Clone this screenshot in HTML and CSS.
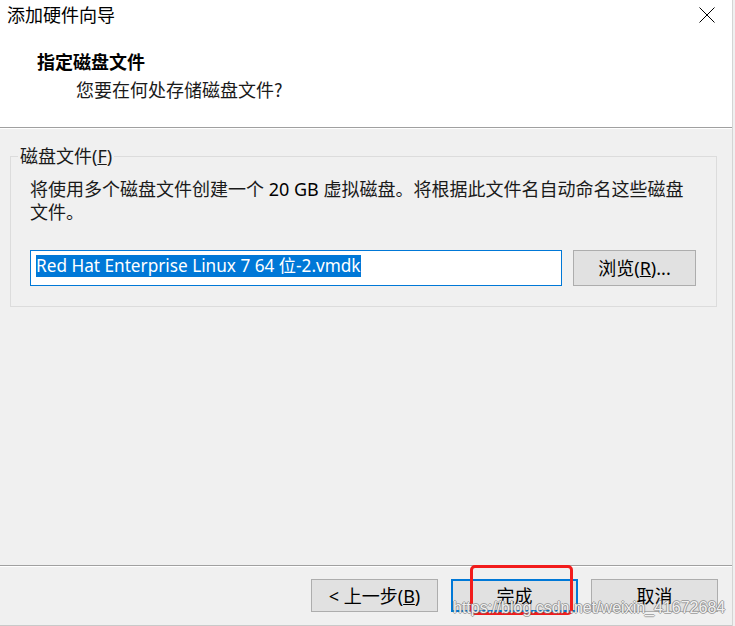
FILE: index.html
```html
<!DOCTYPE html>
<html lang="zh-CN">
<head>
<meta charset="utf-8">
<title>添加硬件向导</title>
<link rel="stylesheet" href="styles.css">
</head>
<body>
<div class="screen">
  <div class="dialog">
    <header class="header">
      <div class="titlebar">
        <span class="title">添加硬件向导</span>
        <svg class="close" width="16" height="16" viewBox="0 0 16 16"><path d="M0.5 0.5L15.5 15.5M15.5 0.5L0.5 15.5" stroke="#000" stroke-width="1" fill="none"/></svg>
      </div>
      <div class="heading">指定磁盘文件</div>
      <div class="subheading">您要在何处存储磁盘文件?</div>
    </header>
    <main class="body">
      <fieldset class="group">
        <legend class="legend">磁盘文件(<u>F</u>)</legend>
        <p class="desc">将使用多个磁盘文件创建一个 <span class="lat">20 GB</span> 虚拟磁盘。将根据此文件名自动命名这些磁盘文件。</p>
        <div class="row">
          <div class="field"><span class="sel">Red Hat Enterprise Linux 7 64 位-2.vmdk</span></div>
          <button class="btn browse">浏览(<u>R</u>)...</button>
        </div>
      </fieldset>
    </main>
    <footer class="footer">
      <button class="btn">&lt; 上一步(<u>B</u>)</button>
      <button class="btn default">完成</button>
      <button class="btn">取消</button>
      <span class="annot"></span>
      <span class="watermark">https://blog.csdn.net/weixin_41672684</span>
    </footer>
  </div>
  <div class="edge"></div>
</div>
</body>
</html>
```

FILE: styles.css
```css
html, body {
  margin: 0;
  padding: 0;
}
body {
  font-family: "Noto Sans", "Noto Sans CJK SC", sans-serif;
  font-size: 18px;
  color: #000;
  background: #f0f0f0;
}
.screen {
  display: flex;
  width: 735px;
  height: 626px;
  overflow: hidden;
  background: #f0f0f0;
}
.dialog {
  position: relative;
  width: 732px;
  height: 626px;
  box-sizing: border-box;
  border-bottom: 1px solid #c9c9c9;
  display: flex;
  flex-direction: column;
  background: #f0f0f0;
}
.edge {
  width: 3px;
  height: 626px;
  box-sizing: border-box;
  border-left: 1px solid #d4d4d4;
  background: #f0f0f0;
}
.header {
  height: 128px;
  box-sizing: border-box;
  background: #fff;
  border-bottom: 1px solid #a0a0a0;
  box-shadow: 0 1px 0 #fff;
}
.titlebar {
  height: 29px;
  display: flex;
  align-items: center;
  justify-content: space-between;
  padding: 0 17px 0 7px;
}
.title {
  font-family: "Noto Sans CJK SC", sans-serif;
  font-size: 18px;
  line-height: 29px;
}
.close {
  display: block;
  margin-top: 1px;
}
.heading {
  margin-top: 20px;
  padding-left: 37px;
  font-family: "Noto Sans CJK SC", sans-serif;
  font-weight: bold;
  font-size: 18px;
  line-height: 24px;
}
.subheading {
  margin-top: 4px;
  padding-left: 76px;
  font-family: "Noto Sans CJK SC", sans-serif;
  font-size: 18px;
  line-height: 24px;
  color: #1a1a1a;
}
.body {
  flex: 1;
  padding: 18px 15px 0 10px;
}
.group {
  margin: 0;
  padding: 0 0 20px 0;
  border: 1px solid #dcdcdc;
  min-width: 0;
}
.legend {
  margin-left: 7px;
  padding: 0 2px;
  font-size: 18px;
  line-height: 20px;
  color: #1a1a1a;
}
.desc {
  margin: 12px 0 0 0;
  padding-left: 19px;
  width: 660px;
  line-height: 23px;
  font-size: 18px;
  color: #1a1a1a;
}
.lat {
  color: #000;
}
.row {
  display: flex;
  gap: 11px;
  margin-top: 26px;
  padding-left: 19px;
}
.field {
  width: 532px;
  height: 36px;
  box-sizing: border-box;
  border: 1px solid #0078d7;
  background: #fff;
  padding: 2px 0 0 5px;
}
.sel {
  display: inline-block;
  background: #0078d7;
  color: #fff;
  line-height: 22px;
  font-size: 17.2px;
  white-space: nowrap;
}
.btn {
  font-family: "Noto Sans", "Noto Sans CJK SC", sans-serif;
  font-size: 18px;
  color: #000;
  background: #e1e1e1;
  border: 1px solid #adadad;
  box-sizing: border-box;
  width: 127px;
  height: 33px;
  padding: 0;
  line-height: 20px;
}
.browse {
  width: 123px;
  height: 36px;
}
.footer {
  position: relative;
  height: 60px;
  box-sizing: border-box;
  border-top: 1px solid #a0a0a0;
  box-shadow: inset 0 1px 0 #fff;
  display: flex;
  justify-content: flex-end;
  align-items: flex-start;
  gap: 13px;
  padding: 13px 14px 0 0;
}
.default {
  border: 2px solid #0078d7;
}
.annot {
  position: absolute;
  left: 470px;
  top: -1px;
  width: 103px;
  height: 50px;
  box-sizing: border-box;
  border: 3px solid #f21c1c;
  border-radius: 5px;
}
.watermark {
  position: absolute;
  left: 453px;
  top: 32px;
  font-family: "Liberation Sans", sans-serif;
  font-size: 16px;
  line-height: 20px;
  color: rgba(255, 255, 255, 0.9);
  text-shadow: 1px 0 0 rgba(120, 120, 120, 0.6), -1px 0 0 rgba(120, 120, 120, 0.6), 0 1px 0 rgba(120, 120, 120, 0.6), 0 -1px 0 rgba(120, 120, 120, 0.6);
  white-space: nowrap;
}
```
